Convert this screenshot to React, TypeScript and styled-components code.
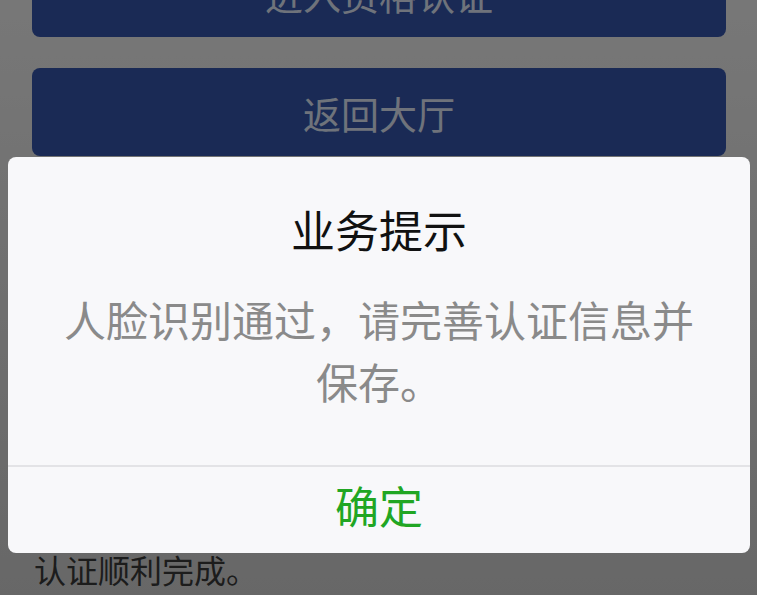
import React from 'react';
import styled, { createGlobalStyle } from 'styled-components';

const GlobalStyle = createGlobalStyle`
  html, body {
    margin: 0;
    padding: 0;
    height: 100%;
    overflow: hidden;
  }
  body {
    font-family: "Noto Sans CJK SC", "Noto Sans", sans-serif;
    background: #ececec;
  }
`;

// page under the mask
const Page = styled.div`
  position: relative;
  height: 595px;
  overflow: hidden;
  background: linear-gradient(#efefef, #cfcfcf);
`;

const Content = styled.div`
  display: flex;
  flex-direction: column;
  gap: 31px;
  padding: 0 31px 0 32px;
  margin-top: -51px;
`;

const BigButton = styled.button`
  height: 88px;
  border: none;
  border-radius: 8px;
  background: #3454aa;
  color: #dfe6f6;
  font-family: inherit;
  font-size: 38px;
  letter-spacing: 0;
`;

const Note = styled.p`
  margin: 362px 0 0 2px;
  font-size: 32px;
  line-height: 40px;
  color: #383838;
`;

// modal
const Mask = styled.div`
  position: absolute;
  inset: 0;
  background: rgba(0, 0, 0, 0.5);
`;

const Dialog = styled.div`
  position: absolute;
  top: 157px;
  left: 8px;
  right: 7px;
  background: #f8f8fa;
  border-radius: 8px;
  overflow: hidden;
  text-align: center;
`;

const Body = styled.div`
  padding: 46px 48px 53px;
  display: flex;
  flex-direction: column;
  gap: 32px;
`;

const Title = styled.h2`
  margin: 0;
  font-size: 44px;
  line-height: 53px;
  font-weight: 400;
  color: #111;
`;

const Message = styled.p`
  margin: 0;
  font-size: 42px;
  line-height: 62px;
  color: #8a8a8a;
`;

const Footer = styled.div`
  border-top: 2px solid #e3e3e6;
  height: 88px;
  display: flex;
  align-items: center;
  justify-content: center;
  padding-bottom: 10px;
  box-sizing: border-box;
`;

const Confirm = styled.button`
  border: none;
  background: none;
  padding: 0;
  font-family: inherit;
  font-size: 44px;
  line-height: 56px;
  color: #21a623;
`;

function App() {
  return (
    <>
      <GlobalStyle />
      <Page>
        <Content>
          <BigButton>进入资格认证</BigButton>
          <BigButton>返回大厅</BigButton>
          <Note>认证顺利完成。</Note>
        </Content>
        <Mask />
        <Dialog>
          <Body>
            <Title>业务提示</Title>
            <Message>人脸识别通过，请完善认证信息并保存。</Message>
          </Body>
          <Footer>
            <Confirm>确定</Confirm>
          </Footer>
        </Dialog>
      </Page>
    </>
  );
}

export default App;
